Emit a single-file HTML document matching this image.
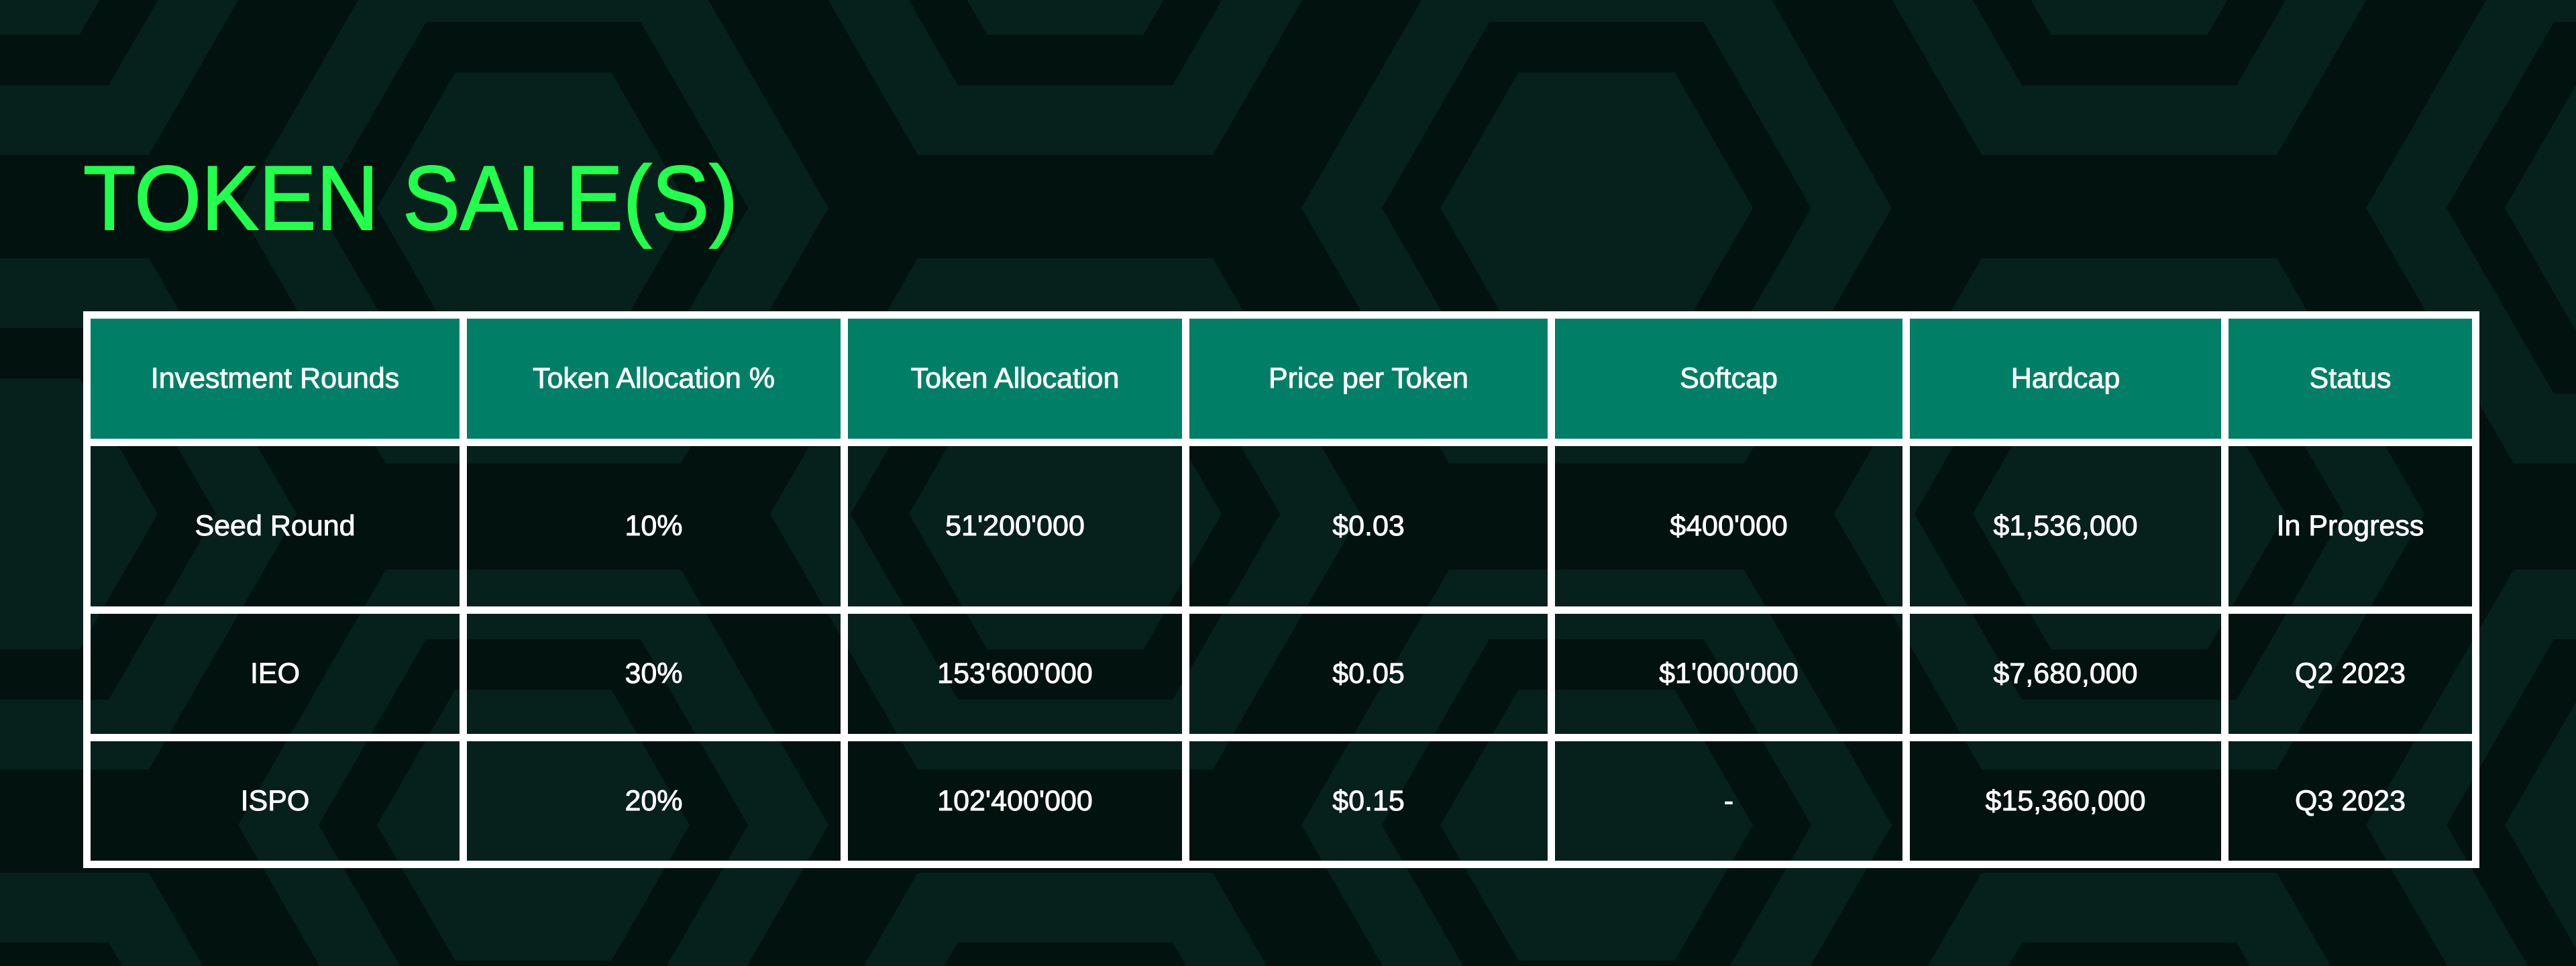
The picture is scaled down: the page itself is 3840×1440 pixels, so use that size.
<!DOCTYPE html>
<html><head><meta charset="utf-8"><style>
html,body{margin:0;padding:0;}
html{width:3840px;height:1440px;overflow:hidden;}
body{width:3840px;height:1440px;overflow:hidden;background:#02120e;position:relative;font-family:"Liberation Sans",sans-serif;}
svg.bg{position:absolute;left:0;top:0;display:block;overflow:hidden;}
h1{position:absolute;left:124px;top:227px;margin:0;font-size:136px;line-height:136px;font-weight:400;color:#22ff4c;letter-spacing:0;-webkit-text-stroke:2px #22ff4c;white-space:nowrap;transform:scaleX(0.945);transform-origin:0 0;}
table{position:absolute;left:124px;top:464px;border-collapse:separate;border-spacing:0;border-top:11px solid #fff;border-left:11px solid #fff;}
td{border-right:11px solid #fff;border-bottom:11px solid #fff;padding:0;}
td div{display:flex;align-items:center;justify-content:center;color:#fff;font-size:43px;-webkit-text-stroke:0.9px #fff;white-space:nowrap;}
tr.h td{background:#007f66;}
tr.h div{height:179px;}
tr.r1 div{height:239px;}
tr.r2 div{height:179px;}
tr.r3 div{height:178px;}
.c1{width:550px}.c2{width:557px}.c3{width:498px}.c4{width:534px}.c5{width:518px}.c6{width:464px}.c7{width:363px}
</style></head><body>
<svg class="bg" width="3840" height="1440" viewBox="0 0 3840 1440">
<defs>
<g id="c">
<polygon points="440,0 220,381 -220,381 -440,0 -220,-381 220,-381" fill="#06201c"/>
<polygon points="320,0 160,277 -160,277 -320,0 -160,-277 160,-277" fill="#02120e"/>
<polygon points="233,0 116.5,202 -116.5,202 -233,0 -116.5,-202 116.5,-202" fill="#06201c"/>
</g>
</defs>
<use href="#c" x="2" y="-150"/><use href="#c" x="2" y="766"/><use href="#c" x="2" y="1682"/>
<use href="#c" x="795" y="310"/><use href="#c" x="795" y="1230"/>
<use href="#c" x="1588" y="-150"/><use href="#c" x="1588" y="766"/><use href="#c" x="1588" y="1682"/>
<use href="#c" x="2380" y="310"/><use href="#c" x="2380" y="1230"/>
<use href="#c" x="3174" y="-150"/><use href="#c" x="3174" y="766"/><use href="#c" x="3174" y="1682"/>
<use href="#c" x="3967" y="310"/><use href="#c" x="3967" y="1230"/>
</svg>
<h1>TOKEN SALE(S)</h1>
<table>
<tr class="h"><td><div class="c1">Investment Rounds</div></td><td><div class="c2">Token Allocation %</div></td><td><div class="c3">Token Allocation</div></td><td><div class="c4">Price per Token</div></td><td><div class="c5">Softcap</div></td><td><div class="c6">Hardcap</div></td><td><div class="c7">Status</div></td></tr>
<tr class="r1"><td><div class="c1">Seed Round</div></td><td><div class="c2">10%</div></td><td><div class="c3">51'200'000</div></td><td><div class="c4">$0.03</div></td><td><div class="c5">$400'000</div></td><td><div class="c6">$1,536,000</div></td><td><div class="c7">In Progress</div></td></tr>
<tr class="r2"><td><div class="c1">IEO</div></td><td><div class="c2">30%</div></td><td><div class="c3">153'600'000</div></td><td><div class="c4">$0.05</div></td><td><div class="c5">$1'000'000</div></td><td><div class="c6">$7,680,000</div></td><td><div class="c7">Q2 2023</div></td></tr>
<tr class="r3"><td><div class="c1">ISPO</div></td><td><div class="c2">20%</div></td><td><div class="c3">102'400'000</div></td><td><div class="c4">$0.15</div></td><td><div class="c5">-</div></td><td><div class="c6">$15,360,000</div></td><td><div class="c7">Q3 2023</div></td></tr>
</table>
</body></html>
